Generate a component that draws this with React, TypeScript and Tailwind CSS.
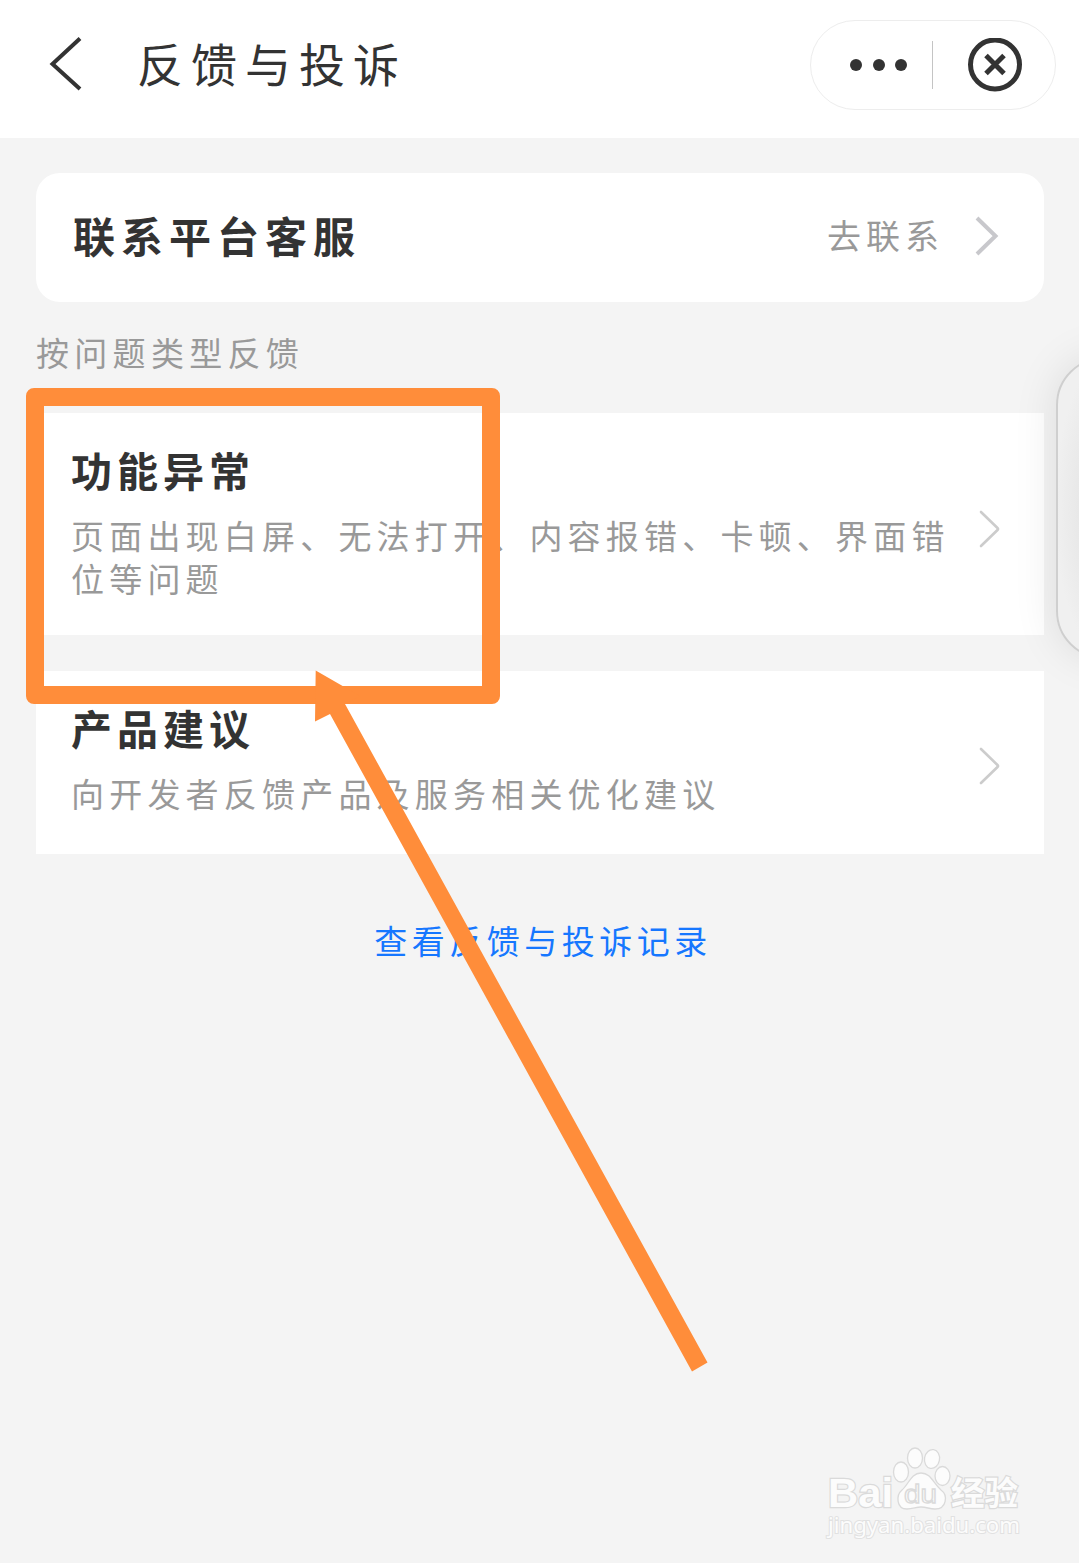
import React from 'react';

type ChevronProps = {
  className?: string;
  bold?: boolean;
};

const Chevron: React.FC<ChevronProps> = ({ className, bold }) => (
  <svg viewBox="0 0 26 42" fill="none" className={className}>
    {bold ? (
      <path d="M3 3 L21.5 21 L3 39" stroke="#c8c8cc" strokeWidth="4" />
    ) : (
      <path d="M3 4 L19.5 20 Q20.5 21 19.5 22 L3 38" stroke="#cccccc" strokeWidth="2.6" strokeLinecap="round" />
    )}
  </svg>
);

const Header: React.FC = () => (
  <header className="flex h-[138px] items-start justify-between bg-white pl-[49px] pr-[23px] pt-[18px]">
    <div className="flex items-start">
      <svg viewBox="0 0 34 54" fill="none" className="mt-[19px] h-[54px] w-[34px]">
        <path d="M31 1.5 L3.5 27 L31 52" stroke="#333333" strokeWidth="4" />
      </svg>
      <h1 className="ml-[54px] mt-[14px] text-[46px] leading-[60px] tracking-[8px]">反馈与投诉</h1>
    </div>
    <div className="mt-0.5 flex h-[90px] w-[246px] items-center rounded-full border border-[#ededed]">
      <div className="flex flex-1 items-center justify-center gap-[10.5px] pl-[14px]">
        <span className="size-3 rounded-full bg-[#333]" />
        <span className="size-3 rounded-full bg-[#333]" />
        <span className="size-3 rounded-full bg-[#333]" />
      </div>
      <div className="h-12 w-px bg-[#c4c4c4]" />
      <div className="flex w-[122px] justify-center pl-px">
        <svg viewBox="0 0 54 54" fill="none" stroke="#333333" className="size-[54px]">
          <circle cx="27" cy="26.5" r="24.5" strokeWidth="5" />
          <path d="M18 17.5 L36 35.5 M36 17.5 L18 35.5" strokeWidth="5" />
        </svg>
      </div>
    </div>
  </header>
);

type FeedbackItemProps = {
  title: string;
  desc: string;
  className?: string;
};

const FeedbackItem: React.FC<FeedbackItemProps> = ({ title, desc, className }) => (
  <div className={`flex items-center justify-between bg-white pl-[35px] pr-10 ${className}`}>
    <div className="w-[890px] self-start">
      <h2 className="text-[41px] font-bold leading-[54px] tracking-[5px]">{title}</h2>
      <p className="mt-[18px] text-[33px] leading-[43px] tracking-[5.2px] text-[#999]">{desc}</p>
    </div>
    <Chevron className="h-[42px] w-[26px] shrink-0" />
  </div>
);

const Watermark: React.FC = () => (
  <svg
    viewBox="0 0 200 100"
    className="absolute left-[825px] top-[1445px] h-[100px] w-[200px]"
    fill="#fcfcfc"
    stroke="#dadada"
    strokeWidth="1.3"
  >
    <text
      x="3"
      y="62"
      fontFamily="'Liberation Sans', sans-serif"
      fontWeight="700"
      fontSize="41"
      textLength="65"
      lengthAdjust="spacingAndGlyphs"
      strokeWidth="2.4"
      paintOrder="stroke"
    >
      Bai
    </text>
    <ellipse cx="76" cy="27" rx="7.5" ry="10" />
    <ellipse cx="90" cy="13" rx="7.5" ry="10" />
    <ellipse cx="107" cy="14" rx="7.5" ry="9.5" transform="rotate(10 107 14)" />
    <ellipse cx="117.5" cy="31" rx="7.5" ry="9.5" />
    <path d="M96 28 C86 28 84 39 77 45 C71 50 71 64 82 64 C88 64 91 62 96 62 C102 62 104 64 110 64 C122 64 123 50 116 45 C108 38 106 28 96 28 Z" />
    <text x="79" y="58" fontFamily="'Liberation Sans', sans-serif" fontSize="26" textLength="33" lengthAdjust="spacingAndGlyphs">
      du
    </text>
    <text
      x="126"
      y="60"
      fontFamily="'Noto Sans CJK SC', sans-serif"
      fontWeight="700"
      fontSize="33"
      textLength="67"
      lengthAdjust="spacingAndGlyphs"
      strokeWidth="2.4"
      paintOrder="stroke"
    >
      经验
    </text>
    <text
      x="3"
      y="88"
      fontFamily="'Noto Sans', sans-serif"
      fontSize="22"
      textLength="192"
      lengthAdjust="spacingAndGlyphs"
      strokeWidth="2"
      stroke="#e1e1e1"
      paintOrder="stroke"
    >
      jingyan.baidu.com
    </text>
  </svg>
);

const App: React.FC = () => {
  return (
    <div className="relative h-[1563px] w-[1079px] overflow-hidden bg-[#f4f4f4] font-['Noto_Sans_CJK_SC',sans-serif] text-[#333]">
      <Header />

      <main className="flex flex-col pl-9 pr-[35px] pt-[35px]">
        <div className="flex h-[129px] items-center justify-between rounded-3xl bg-white pb-1.5 pl-[37px] pr-11">
          <h2 className="text-[42px] font-bold leading-[60px] tracking-[6px]">联系平台客服</h2>
          <div className="flex items-center">
            <span className="text-[34px] leading-[50px] tracking-[5px] text-[#999]">去联系</span>
            <Chevron bold className="mt-[3px] ml-[30px] h-[42px] w-[26px]" />
          </div>
        </div>

        <p className="mt-[25px] h-[50px] text-[33px] leading-[50px] tracking-[5.3px] text-[#999]">按问题类型反馈</p>

        <FeedbackItem
          className="mt-9 h-[222px] pt-[29px] pb-[19px]"
          title="功能异常"
          desc="页面出现白屏、无法打开、内容报错、卡顿、界面错位等问题"
        />
        <FeedbackItem
          className="mt-9 h-[183px] pt-[29px] pb-[23px]"
          title="产品建议"
          desc="向开发者反馈产品及服务相关优化建议"
        />

        <a href="#" className="mt-[61px] self-center pl-1.5 text-[33px] leading-[50px] tracking-[4.5px] text-[#1677ff]">
          查看反馈与投诉记录
        </a>
      </main>

      {/* Edge panel handle */}
      <div className="absolute left-[1056px] top-[357px] h-[302px] w-[120px] rounded-[48px] border-2 border-[#cfcfcf] bg-[radial-gradient(ellipse_at_center,#e3e3e3_0%,#e8e8e8_45%,#f0f0f0_75%)] shadow-[0_0_44px_rgba(0,0,0,0.1)]" />

      {/* Highlight frame and pointer */}
      <div className="absolute left-[26px] top-[387.5px] h-[316.5px] w-[473.5px] rounded-lg border-[18px] border-[#ff8d3a]" />
      <svg viewBox="0 0 420 720" className="absolute left-[300px] top-[660px] h-[720px] w-[420px]">
        <path d="M15.7 10.5 L60 36 L45 44 L407.5 702.5 L392 711.5 L30 54 L15 61.5 Z" fill="#ff8d3a" />
      </svg>

      <Watermark />
    </div>
  );
};

export default App;
